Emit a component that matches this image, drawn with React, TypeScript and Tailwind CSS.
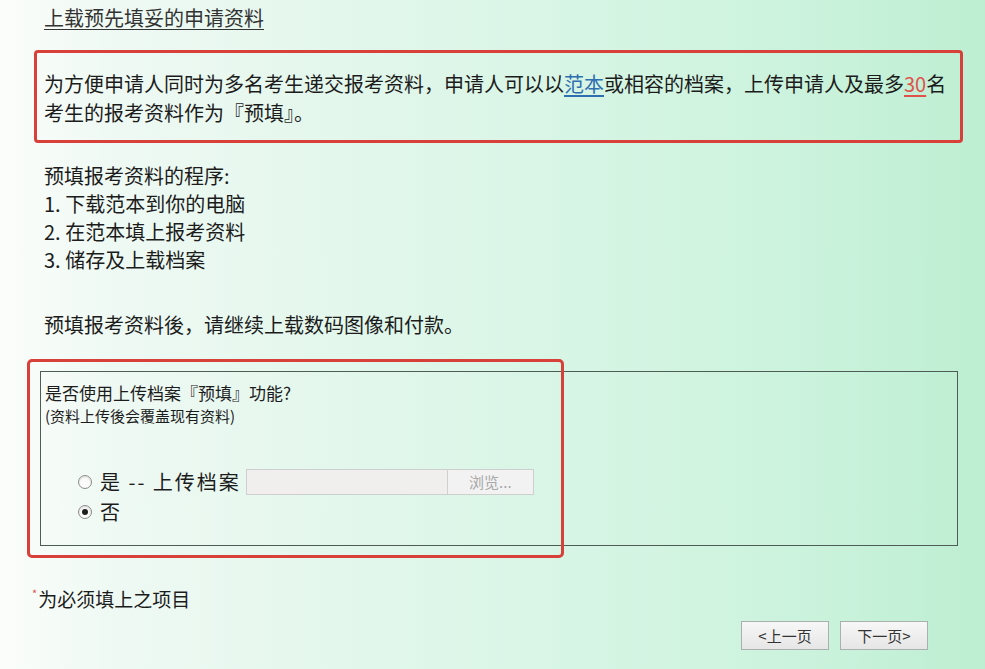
import React from "react";

const Radio = ({ checked }: { checked?: boolean }) => (
  <span className="inline-flex h-[14px] w-[14px] items-center justify-center rounded-full border border-[#8c8c8c] bg-[#fbfbfb] shadow-[inset_0_1px_2px_rgba(0,0,0,0.15)]">
    {checked ? <span className="h-[6px] w-[6px] rounded-full bg-[#1e1e1e]" /> : null}
  </span>
);

export default function App() {
  return (
    <div
      className="relative h-[669px] w-[985px] overflow-hidden bg-[linear-gradient(90deg,#fbfdfb_0%,#eef9f3_12%,#e3f7ec_35%,#d6f5e4_60%,#c9f2db_85%,#bdeed2_100%)] text-[#1c1c1c] text-[20px] leading-[28px]"
      style={{ fontFamily: '"Noto Sans CJK SC", "Noto Sans", sans-serif' }}
    >
      <div className="pl-[44px] pt-[4px]">
        <div className="leading-[28px] underline underline-offset-[3px] decoration-[1px] text-[#333]">
          上载预先填妥的申请资料
        </div>
      </div>

      <div className="ml-[34px] mr-[22px] mt-[18px] rounded-[4px] border-[3px] border-[#d8403a] pl-[7px] pr-[4px] pt-[16px] pb-[13px] leading-[29px]">
        为方便申请人同时为多名考生递交报考资料，申请人可以以
        <span className="text-[#2f6fb0] underline underline-offset-[3px]">范本</span>
        或相容的档案，上传申请人及最多
        <span className="text-[#e0524c] underline underline-offset-[3px]">30</span>
        名考生的报考资料作为『预填』。
      </div>

      <div className="pl-[44px] mt-[19px] leading-[28px]">
        <div>预填报考资料的程序:</div>
        <div>1. 下载范本到你的电脑</div>
        <div>2. 在范本填上报考资料</div>
        <div>3. 储存及上载档案</div>
        <div className="mt-[37px]">预填报考资料後，请继续上载数码图像和付款。</div>
      </div>

      <div className="relative ml-[40px] mr-[27px] mt-[32px] h-[175px] border-[1.5px] border-[#4e5c56] pl-[4px] pt-[9px]">
        <div className="text-[17px] leading-[24px]">是否使用上传档案『预填』功能?</div>
        <div className="text-[15px] leading-[22px]">(资料上传後会覆盖现有资料)</div>
        <div className="mt-[40px] flex h-[30px] items-center pl-[33px]">
          <Radio />
          <span className="ml-[8px] text-[20px] tracking-[2px]">是 -- 上传档案</span>
          <div className="ml-[5px] flex h-[26px] items-stretch">
            <div className="w-[202px] border border-[#cfcfcf] bg-[#f1eeee]" />
            <div className="flex w-[86px] items-center justify-center border border-l-0 border-[#cfcfcf] bg-[#f2f2f2] text-[15px] text-[#a8a8a8]">
              浏览...
            </div>
          </div>
        </div>
        <div className="flex h-[30px] items-center pl-[33px]">
          <Radio checked />
          <span className="ml-[8px] text-[20px]">否</span>
        </div>
        <div className="pointer-events-none absolute left-[-14px] top-[-13px] h-[199px] w-[537px] rounded-[5px] border-[3px] border-[#d8403a]" />
      </div>

      <div className="mt-[40px] flex items-start pl-[32px] leading-[26px]">
        <span className="mr-[1px] text-[11px] leading-[14px] text-[#e0524c]">*</span>
        <span className="text-[19px]">为必须填上之项目</span>
      </div>

      <div className="mr-[57px] mt-[9px] flex justify-end gap-[11px]">
        <button className="h-[29px] w-[88px] border border-[#aab0ad] bg-[linear-gradient(#f7f7f7,#e6e6e6)] text-[15px] leading-[27px] text-[#333]">
          &lt;上一页
        </button>
        <button className="h-[29px] w-[88px] border border-[#aab0ad] bg-[linear-gradient(#f7f7f7,#e6e6e6)] text-[15px] leading-[27px] text-[#333]">
          下一页&gt;
        </button>
      </div>
    </div>
  );
}
